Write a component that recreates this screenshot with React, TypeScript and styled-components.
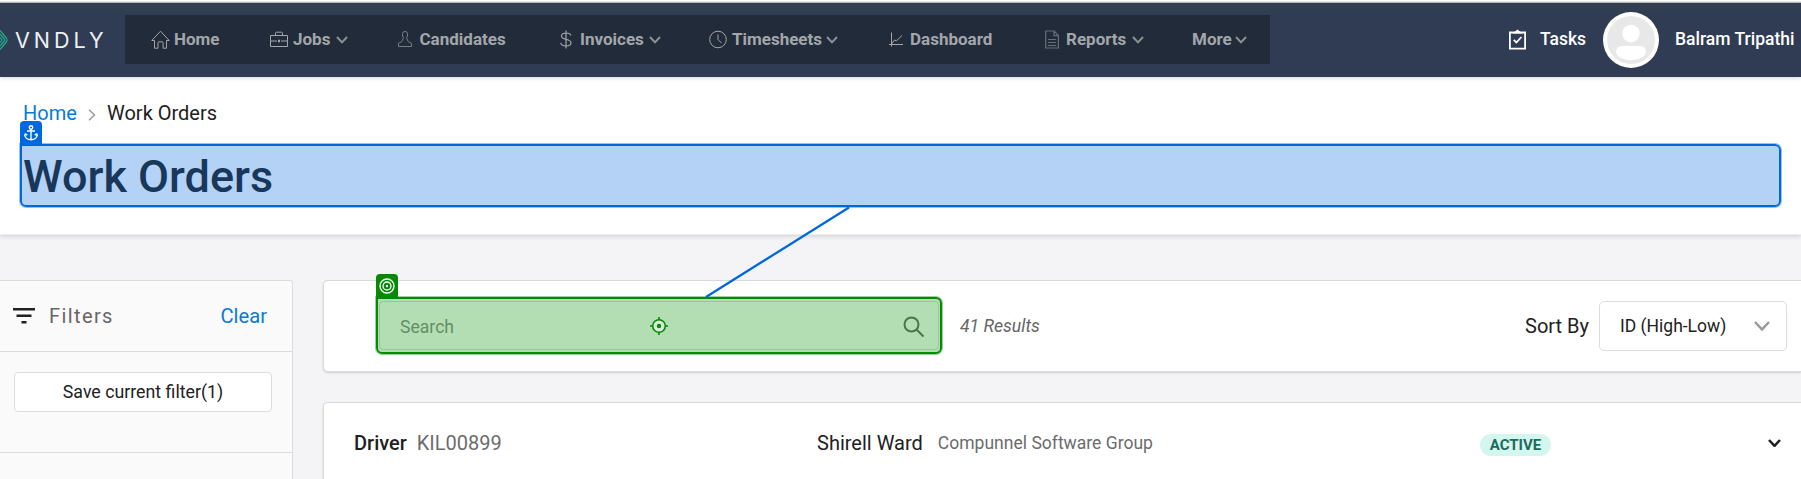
import React from 'react';
import styled, { createGlobalStyle } from 'styled-components';

const Global = createGlobalStyle`
  * { box-sizing: border-box; }
  body { margin: 0; background: #f4f4f7; font-family: Roboto, "Liberation Sans", sans-serif; color: #212121; overflow: hidden; }
  svg { display: block; flex: none; }
`;

const Page = styled.div`width: 1801px; height: 479px; overflow: hidden; position: relative;`;

const Header = styled.header`
  height: 77px; display: flex; align-items: stretch;
  border-top: 1px solid #fff;
  background: linear-gradient(#e9ebe9 0 1px, #b4b6b6 1px 2px, #333f4f 2px, #303c53 16px, #303c53 100%);
  box-shadow: 0 1px 4px rgba(0, 0, 0, 0.16);
  position: relative;
`;
const Brand = styled.div`width: 125px; display: flex; align-items: flex-start; padding-top: 27px;`;
const BrandName = styled.span`
  font: 400 21.5px/24px Inter, sans-serif; letter-spacing: 4px; color: #eef0f3; margin-left: 7px;
`;
const Nav = styled.nav`
  margin-top: 14px; width: 1145px; height: 49px; padding-left: 26px; background: #222b39;
  display: grid; grid-template-columns: 119px 128px 162px 149px 180px 156px 147px 78px;
`;
const NavItem = styled.a`display: flex; align-items: center; color: #a3a6ab; font-size: 17px; font-weight: 700; white-space: nowrap;`;
const IconSlot = styled.span<{ $w: number }>`width: ${p => p.$w}px; flex: none; padding-bottom: 1px;`;
const NavLabel = styled.span<{ $w: number }>`width: ${p => p.$w}px; line-height: 20px; padding-bottom: 2px;`;

const Account = styled.div`margin-left: auto; display: flex; align-items: flex-start; color: #fff; font-size: 17.5px; font-weight: 500; padding-top: 11px;`;
const TaskIcon = styled.span`margin: 17px 14px 0 0;`;
const TaskLabel = styled.span`width: 63px; line-height: 20px; margin-top: 17px;`;
const Avatar = styled.span`margin-right: 16px;`;
const UserName = styled.span`width: 126px; line-height: 20px; margin-top: 17px; white-space: nowrap;`;

const TitleBar = styled.section`
  height: 158px; background: #fff; padding: 24px 20px 0;
  border-bottom: 1px solid #ebebeb;
  box-shadow: 0 1px 5px rgba(0, 0, 0, 0.16);
`;
const Crumbs = styled.div`display: flex; align-items: center; height: 24px; font-size: 20px; padding-left: 3px;`;
const CrumbLink = styled.a`color: #0b7bcf; width: 65px;`;
const CrumbIcon = styled.span`padding-top: 3px;`;
const CrumbHere = styled.span`margin-left: 11px;`;
const TitleBox = styled.div`position: relative; margin-top: 19px; height: 63px; width: 1761px;`;
const Title = styled.h1`margin: 0; padding-left: 3px; font-size: 45px; font-weight: 500; line-height: 66px; color: #222; white-space: nowrap;`;

const Highlight = styled.div<{ $line: string; $fill: string; $halo: string }>`
  position: absolute; inset: 0; border: 2px solid ${p => p.$line}; background: ${p => p.$fill};
  border-radius: 6px; border-top-left-radius: 0; box-shadow: 0 0 0 1px ${p => p.$halo};
`;
const Badge = styled.div<{ $bg: string }>`
  position: absolute; left: 0; top: -23px; width: 22px; height: 24px; background: ${p => p.$bg};
  border-radius: 4px 4px 0 0; display: flex; justify-content: center; padding-top: 4px;
`;
const Connector = styled.svg`position: absolute; left: 700px; top: 200px; pointer-events: none;`;

const Body = styled.main`display: flex; align-items: flex-start; padding-top: 45px; gap: 30px;`;
const Sidebar = styled.aside`
  width: 293px; height: 240px; background: #fafafa; border: 1px solid #dcdcdc; border-left: 0; border-top-right-radius: 3px;
`;
const FilterHead = styled.div`height: 71px; display: flex; align-items: center; padding: 0 25px 0 12px; border-bottom: 1px solid #dcdcdc;`;
const FilterLabel = styled.span`margin-left: 13px; font-size: 20px; letter-spacing: 1.4px; color: #666;`;
const Clear = styled.a`margin-left: auto; font-size: 20.2px; color: #0b7bcf;`;
const SaveRow = styled.div`height: 101px; padding: 20px 20px 0 14px; border-bottom: 1px solid #dcdcdc;`;
const SaveButton = styled.button`
  width: 258px; height: 40px; background: #fff; border: 1px solid #dcdcdc; border-radius: 4px; padding: 0;
  font: 400 17.75px Roboto, sans-serif; color: #212121;
`;

const Content = styled.div`flex: 1; min-width: 0;`;
const Card = styled.section<{ $h: number }>`
  height: ${p => p.$h}px; background: #fff; border: 1px solid #d9d9db; border-right: 0; border-radius: 5px 0 0 5px;
  box-shadow: 0 1px 2px rgba(0, 0, 0, 0.16); margin-bottom: 30px; display: flex; align-items: flex-start; padding-left: 52px;
`;
const Search = styled.div`
  position: relative; width: 566px; height: 57px; margin-top: 16px; padding: 4px 3px;
`;
const Field = styled.div`
  height: 49px; border: 1px solid #dcdcdc; border-radius: 4px; display: flex; align-items: center;
  justify-content: space-between; padding: 2px 13px 0 20px; font-size: 17.6px; color: #8e8e8e;
`;
const Aim = styled.span`position: absolute; left: 274px; top: 20px;`;
const Results = styled.span`margin: 33px 0 0 18px; font-size: 17.6px; font-style: italic; line-height: 24px; color: #666;`;
const SortLabel = styled.span`margin: 33px 10px 0 auto; font-size: 20px; line-height: 24px;`;
const SortSelect = styled.div`
  margin: 20px 14px 0 0; width: 188px; height: 50px; border: 1px solid #dcdcdc; border-radius: 5px;
  display: flex; align-items: center; justify-content: space-between; padding: 0 16px 1px 20px; font-size: 17.5px;
`;
const OrderCard = styled(Card)`
  display: grid; grid-template-columns: 463px 663px 288px auto; padding: 28px 0 0 30px; line-height: 24px; font-size: 20px;
`;
const Cell = styled.div`display: flex; align-items: center; height: 24px; white-space: nowrap;`;
const Strong = styled.span`font-weight: 500;`;
const Muted = styled.span<{ $size: number; $gap: number }>`color: #6c6c6c; font-size: ${p => p.$size}px; margin-left: ${p => p.$gap}px;`;
const Status = styled.span`
  width: 71px; height: 22px; border-radius: 11px; background: #d3f6ee; color: #1b6b5e; margin-top: 4px;
  display: flex; align-items: center; justify-content: center; font-size: 15px; font-weight: 700;
`;

const Chevron = ({ w = 12, h = 8, color = '#8f9297', sw = 2 }: { w?: number; h?: number; color?: string; sw?: number }) => (
  <svg width={w} height={h} fill="none" stroke={color} strokeWidth={sw}>
    <path d={`M1 1L${w / 2} ${h - 1.6}L${w - 1} 1`} />
  </svg>
);

const line = { fill: 'none', stroke: '#a3a6ab', strokeWidth: 1 };
const icons = {
  home: <svg width="19" height="19" {...line}><path d="M.8 10.5L9.5 1.2l8.700 9.300h-2.700v7.700h-3.400v-5.400q0-1-1-1H8q-1 0-1 1v5.400H3.500v-7.700z" /></svg>,
  jobs: <svg width="18" height="18" {...line}><path d="M.5 5.500h17v11H.5zM5.500 5V3.200q0-1 1-1h5q1 0 1 1V5M1 11h6m4 0h6" /><path d="M8.500 10h1v2h-1z" fill="#a3a6ab" /></svg>,
  person: <svg width="14" height="18" {...line} stroke="#777d86"><path d="M.5 16.500v-3.300l3.200-1.500 1.800-3.700L4.500 6V3.500Q4.500 1.500 7 1.500t2.500 2V6l-1 2 1.800 3.700 3.200 1.500v3.300z" /></svg>,
  dollar: <svg width="12" height="19" {...line} strokeWidth="1.200"><path d="M6 .5v18M10.800 5.500C10.500 3.800 8.500 3 6 3S1.500 4 1.500 6.200C1.500 10 11 8.500 11 12.800 11 15 8.800 16 6 16S1 15 .8 12.800" /></svg>,
  clock: <svg width="18" height="19" {...line}><circle cx="9" cy="9.500" r="8.300" /><path d="M9 4.500v5l3.500 3.500" /></svg>,
  chart: <svg width="14" height="15" {...line}><path d="M2.500 .5v14M0 12.500h14M2.500 12l3-4 2 .8L13 3.500" /></svg>,
  doc: <svg width="14" height="19" {...line} stroke="#666e79" strokeWidth="1.200"><path d="M.7 1h8.500l4.200 4.500V18H.700zM9 1v4.700h4.300M3 9.500h8M3 12.500h8M3 15.500h8" /></svg>,
};

const items: { label: string; icon?: keyof typeof icons; slot: number; w: number; menu?: boolean }[] = [
  { label: 'Home', icon: 'home', slot: 23, w: 47 },
  { label: 'Jobs', icon: 'jobs', slot: 23, w: 43, menu: true },
  { label: 'Candidates', icon: 'person', slot: 21.5, w: 89 },
  { label: 'Invoices', icon: 'dollar', slot: 20, w: 69, menu: true },
  { label: 'Timesheets', icon: 'clock', slot: 23, w: 94, menu: true },
  { label: 'Dashboard', icon: 'chart', slot: 21, w: 85 },
  { label: 'Reports', icon: 'doc', slot: 21, w: 66, menu: true },
  { label: 'More', slot: 0, w: 43, menu: true },
];

export default function App() {
  return (
    <Page>
      <Global />
      <Header>
        <Brand>
          <svg width="8" height="24" viewBox="0 0 8 24" fill="none" stroke="#25a58c" strokeWidth="1.300">
            <path d="M0 2.500l6.300 7.500q1.300 2 0 4L0 21.500M0 6l4 4.500q1.200 1.500 0 3L0 18M0 9.500l1.500 1.500q.8 1 0 2L0 14.500" />
          </svg>
          <BrandName>VNDLY</BrandName>
        </Brand>
        <Nav>
          {items.map(i => (
            <NavItem key={i.label}>
              {i.icon && <IconSlot $w={i.slot}>{icons[i.icon]}</IconSlot>}
              <NavLabel $w={i.w}>{i.label}</NavLabel>
              {i.menu && <Chevron />}
            </NavItem>
          ))}
        </Nav>
        <Account>
          <TaskIcon>
            <svg width="17" height="21" fill="none" stroke="#fff" strokeWidth="1.800">
              <path d="M.9 3.500h15.200v16.200H.9zM4.800 10.800l2.600 2.700 5-5.500" /><path d="M3.500 4.500L8.500 .5l5 4z" fill="#fff" stroke="none" />
            </svg>
          </TaskIcon>
          <TaskLabel>Tasks</TaskLabel>
          <Avatar>
            <svg width="56" height="56">
              <circle cx="28" cy="28" r="28" fill="#fff" /><circle cx="28" cy="28" r="24" fill="#e8e8e8" />
              <circle cx="28" cy="21.500" r="8.700" fill="#fff" />
              <path d="M13 40q0-6 6-6h18q6 0 6 6c0 4-7 8.300-15 8.300S13 44 13 40z" fill="#fff" />
            </svg>
          </Avatar>
          <UserName>Balram Tripathi</UserName>
        </Account>
      </Header>
      <TitleBar>
        <Crumbs>
          <CrumbLink>Home</CrumbLink>
          <CrumbIcon><svg width="8" height="12" fill="none" stroke="#999" strokeWidth="1.500"><path d="M1 .8L6.500 6 1 11.200" /></svg></CrumbIcon>
          <CrumbHere>Work Orders</CrumbHere>
        </Crumbs>
        <TitleBox>
          <Title>Work Orders</Title>
          <Highlight $line="#0067e0" $fill="rgba(4,105,222,.3)" $halo="rgba(0,103,224,.4)" />
          <Badge $bg="#0067e0">
            <svg width="14" height="16" fill="none" stroke="#fff" strokeWidth="1.400"><circle cx="7" cy="2.500" r="1.700" /><path d="M7 4v11M3 6h8M.8 9.500c0 7 12.400 7 12.400 0M.5 11l.8-2 2 1M13.500 11l-.8-2-2 1" /></svg>
          </Badge>
        </TitleBox>
      </TitleBar>
      <Body>
        <Sidebar>
          <FilterHead>
            <svg width="24" height="16" fill="#212121"><path d="M1 0h22v2.500H1zM4.500 6.500h15V9h-15zM9.500 13h5v2.500h-5z" /></svg>
            <FilterLabel>Filters</FilterLabel>
            <Clear>Clear</Clear>
          </FilterHead>
          <SaveRow><SaveButton>Save current filter(1)</SaveButton></SaveRow>
        </Sidebar>
        <Content>
          <Card $h={92}>
            <Search>
              <Field>
                Search
                <svg width="22" height="22" fill="none" stroke="#6a6a6a" strokeWidth="2"><circle cx="8.500" cy="8.500" r="7" /><path d="M13.500 13.500l7 7" /></svg>
              </Field>
              <Highlight $line="#048a04" $fill="rgba(4,145,8,.3)" $halo="rgba(4,140,4,.4)" />
              <Badge $bg="#048a04">
                <svg width="16" height="16" fill="none" stroke="#fff" strokeWidth="1.300"><circle cx="8" cy="8" r="7" /><circle cx="8" cy="8" r="4" /><circle cx="8" cy="8" r="1.200" fill="#fff" stroke="none" /></svg>
              </Badge>
              <Aim>
                <svg width="18" height="18" fill="none" stroke="#048a04" strokeWidth="1.600"><circle cx="9" cy="9" r="6.300" fill="#d9eeda" /><circle cx="9" cy="9" r="2.200" fill="#048a04" stroke="none" /><path d="M9 0v3M9 15v3M0 9h3M15 9h3" /></svg>
              </Aim>
            </Search>
            <Results>41 Results</Results>
            <SortLabel>Sort By</SortLabel>
            <SortSelect>ID (High-Low)<Chevron w={16} h={10} color="#999" sw={2.500} /></SortSelect>
          </Card>
          <OrderCard $h={120}>
            <Cell><Strong>Driver</Strong><Muted $size={20} $gap={10}>KIL00899</Muted></Cell>
            <Cell>Shirell Ward<Muted $size={17.55} $gap={15}>Compunnel Software Group</Muted></Cell>
            <Cell><Status>ACTIVE</Status></Cell>
            <Cell><Chevron w={13} h={8.500} color="#212121" sw={2.500} /></Cell>
          </OrderCard>
        </Content>
      </Body>
      <Connector width="155" height="100" stroke="#0067e0" strokeWidth="2.300"><path d="M149 7.500L6 97" /></Connector>
    </Page>
  );
}
